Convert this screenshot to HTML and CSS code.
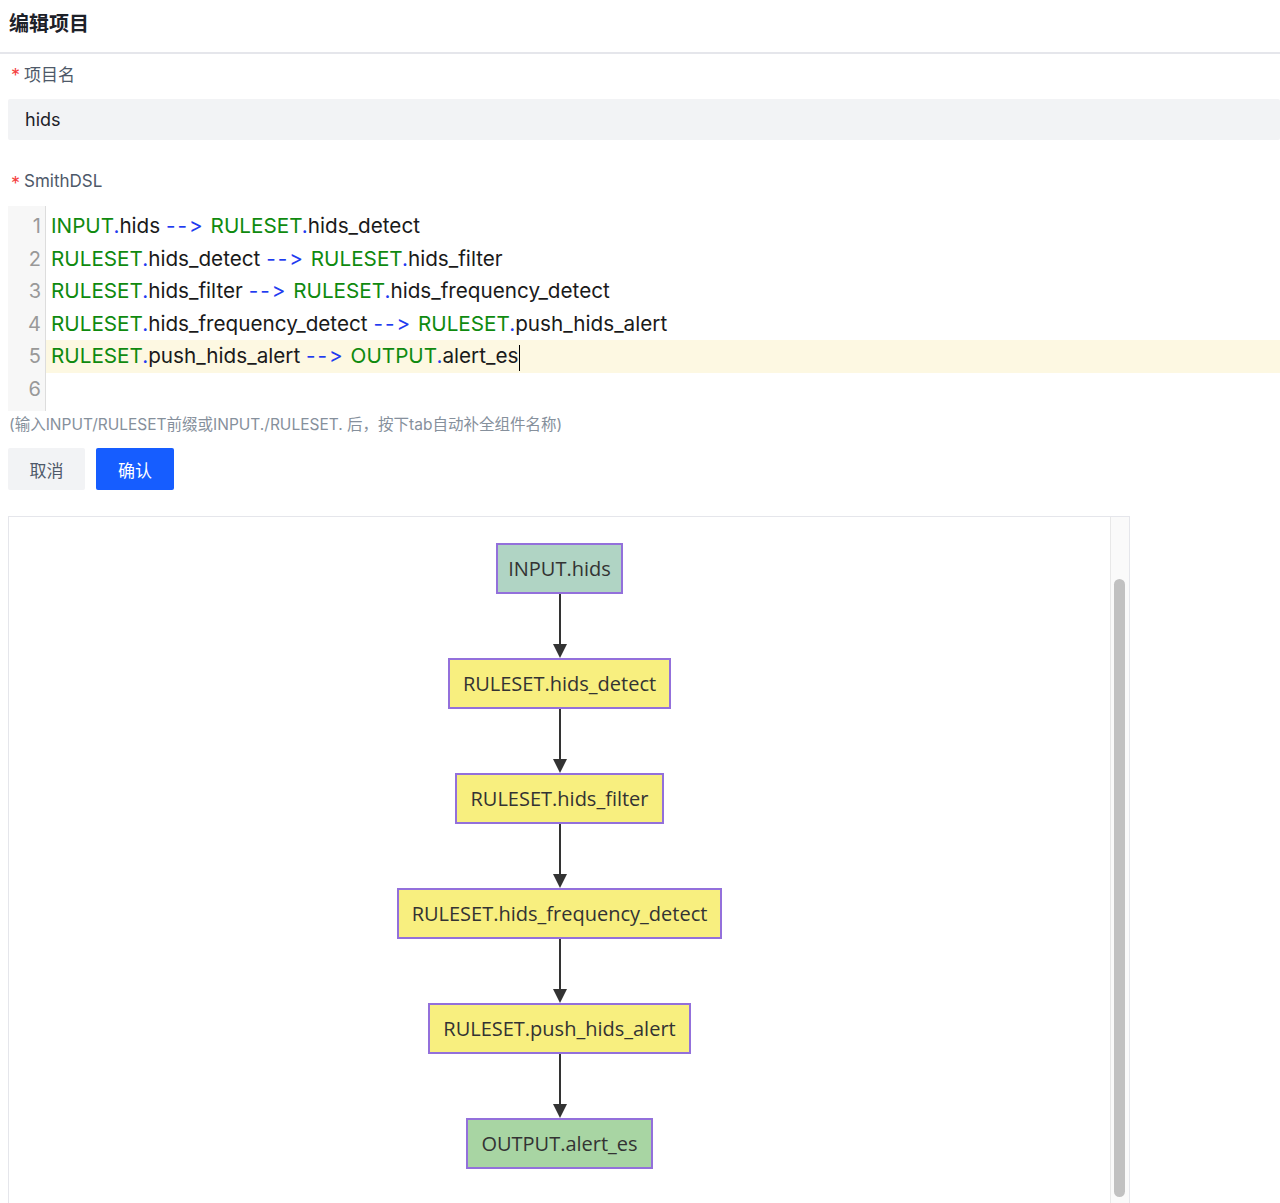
FILE: index.html
```html
<!DOCTYPE html>
<html lang="zh">
<head>
<meta charset="utf-8">
<title>编辑项目</title>
<link rel="stylesheet" href="styles.css">
</head>
<body>
<header class="page-header"><h1 class="title">编辑项目</h1></header>
<main class="form">
  <div class="field">
    <label class="label"><span class="req">*</span>项目名</label>
    <div class="input">hids</div>
  </div>
  <div class="field field-dsl">
    <label class="label"><span class="req">*</span>SmithDSL</label>
    <div class="editor">
      <div class="gutter">
        <div class="ln">1</div><div class="ln">2</div><div class="ln">3</div><div class="ln">4</div><div class="ln">5</div><div class="ln">6</div>
      </div>
      <div class="code">
        <div class="line"><span class="kw">INPUT</span><span class="dot">.</span>hids <span class="op">--&gt;</span> <span class="kw">RULESET</span><span class="dot">.</span>hids_detect</div>
        <div class="line"><span class="kw">RULESET</span><span class="dot">.</span>hids_detect <span class="op">--&gt;</span> <span class="kw">RULESET</span><span class="dot">.</span>hids_filter</div>
        <div class="line"><span class="kw">RULESET</span><span class="dot">.</span>hids_filter <span class="op">--&gt;</span> <span class="kw">RULESET</span><span class="dot">.</span>hids_frequency_detect</div>
        <div class="line"><span class="kw">RULESET</span><span class="dot">.</span>hids_frequency_detect <span class="op">--&gt;</span> <span class="kw">RULESET</span><span class="dot">.</span>push_hids_alert</div>
        <div class="line active"><span class="kw">RULESET</span><span class="dot">.</span>push_hids_alert <span class="op">--&gt;</span> <span class="kw">OUTPUT</span><span class="dot">.</span>alert_es<span class="cursor"></span></div>
        <div class="line"></div>
      </div>
    </div>
    <p class="hint">(输入INPUT/RULESET前缀或INPUT./RULESET. 后，按下tab自动补全组件名称)</p>
  </div>
  <div class="actions">
    <button class="btn btn-cancel">取消</button>
    <button class="btn btn-primary">确认</button>
  </div>
  <section class="diagram">
    <div class="canvas">
      <div class="node node-io node-in">INPUT.hids</div>
      <svg class="edge" width="16" height="64" viewBox="0 0 16 64"><line x1="8" y1="0" x2="8" y2="52" stroke="#333" stroke-width="2"/><path d="M1 50 L15 50 L8 64 Z" fill="#333"/></svg>
      <div class="node node-rule">RULESET.hids_detect</div>
      <svg class="edge" width="16" height="64" viewBox="0 0 16 64"><line x1="8" y1="0" x2="8" y2="52" stroke="#333" stroke-width="2"/><path d="M1 50 L15 50 L8 64 Z" fill="#333"/></svg>
      <div class="node node-rule">RULESET.hids_filter</div>
      <svg class="edge" width="16" height="64" viewBox="0 0 16 64"><line x1="8" y1="0" x2="8" y2="52" stroke="#333" stroke-width="2"/><path d="M1 50 L15 50 L8 64 Z" fill="#333"/></svg>
      <div class="node node-rule">RULESET.hids_frequency_detect</div>
      <svg class="edge" width="16" height="64" viewBox="0 0 16 64"><line x1="8" y1="0" x2="8" y2="52" stroke="#333" stroke-width="2"/><path d="M1 50 L15 50 L8 64 Z" fill="#333"/></svg>
      <div class="node node-rule">RULESET.push_hids_alert</div>
      <svg class="edge" width="16" height="64" viewBox="0 0 16 64"><line x1="8" y1="0" x2="8" y2="52" stroke="#333" stroke-width="2"/><path d="M1 50 L15 50 L8 64 Z" fill="#333"/></svg>
      <div class="node node-io node-out">OUTPUT.alert_es</div>
    </div>
    <div class="scrollbar"><div class="thumb"></div></div>
  </section>
</main>
</body>
</html>
```
FILE: styles.css
```css
* { box-sizing: border-box; }
html, body { margin: 0; padding: 0; background: #fff; }
body {
  font-family: Inter, "Noto Sans CJK SC", sans-serif;
  color: #1d2129;
  width: 1280px;
  height: 1203px;
  overflow: hidden;
}
.page-header {
  height: 54px;
  border-bottom: 2px solid #e5e6eb;
  padding: 0 9px;
  display: flex;
  align-items: center;
}
.title {
  margin: 0;
  font-size: 20px;
  font-weight: 700;
  font-family: "Noto Sans CJK SC", sans-serif;
  color: #1d2129;
  line-height: 1;
  margin-top: -6px;
}
.form { padding: 0 0 0 8px; }
.field { display: flex; flex-direction: column; }
.label {
  display: flex;
  align-items: center;
  height: 24px;
  margin-top: 7px;
  font-size: 17px;
  color: #4e5969;
  font-family: Inter, "Noto Sans CJK SC", sans-serif;
}
.req {
  color: #f53f3f;
  font-size: 18px;
  margin: 0 4px 0 3px;
  position: relative;
  top: 2px;
}
.input {
  margin-top: 14px;
  height: 41px;
  background: #f2f3f5;
  border-radius: 2px;
  padding: 0 17px;
  display: flex;
  align-items: center;
  font-size: 18px;
  color: #1d2129;
}
.field-dsl { margin-top: 29px; }
.field-dsl .label { margin-top: 0; }
.editor {
  margin-top: 13px;
  display: flex;
  min-height: 205px;
  font-family: Inter, "Noto Sans CJK SC", sans-serif;
  font-size: 20.7px;
}
.gutter {
  width: 38px;
  background: #f7f7f7;
  border-right: 1px solid #dddddd;
  padding-top: 4px;
  padding-bottom: 4px;
  flex: none;
}
.ln {
  height: 32.6px;
  line-height: 32.6px;
  text-align: right;
  padding-right: 4px;
  color: #999999;
  font-size: 20px;
}
.code { flex: 1; padding-top: 4px; }
.line {
  height: 32.6px;
  line-height: 32.6px;
  padding-left: 5px;
  color: #1a1a1a;
  white-space: pre;
}
.line.active { background: #fdf8e2; }
.kw { color: #0f8a0f; }
.dot { color: #1f3cf0; }
.op { color: #1f3cf0; letter-spacing: 2px; }
.cursor {
  display: inline-block;
  width: 0;
  height: 26px;
  border-left: 1px solid #000;
  vertical-align: middle;
  margin-left: 1px;
}
.hint {
  margin: 4px 0 0 1px;
  font-size: 15.5px;
  line-height: 20px;
  color: #86909c;
}
.actions {
  display: flex;
  gap: 11px;
  margin-top: 13px;
}
.btn {
  height: 42px;
  border: none;
  border-radius: 2px;
  font-size: 17px;
  font-family: "Noto Sans CJK SC", sans-serif;
  padding: 0;
  cursor: pointer;
}
.btn-cancel { width: 77px; background: #f2f3f5; color: #4e5969; }
.btn-primary { width: 78px; background: #165dff; color: #fff; }
.diagram {
  margin-top: 26px;
  width: 1122px;
  height: 700px;
  border: 1px solid #e5e6eb;
  display: flex;
}
.canvas {
  flex: 1;
  display: flex;
  flex-direction: column;
  align-items: center;
  padding-top: 26px;
}
.node {
  height: 51px;
  border: 2px solid #9370db;
  display: flex;
  align-items: center;
  justify-content: center;
  padding: 0 13px;
  font-family: "Open Sans", "DejaVu Sans", sans-serif;
  font-size: 20px;
  color: #333;
  white-space: nowrap;
}
.node-in { background: #b0d4c4; padding: 0 10px; }
.node-out { background: #a8d5a3; }
.node-rule { background: #f8ef7f; }
.edge { display: block; margin: 0; }
.scrollbar {
  width: 19px;
  background: #fafafa;
  border-left: 1px solid #e8e8e8;
  padding: 62px 4px 0 3px;
  flex: none;
}
.thumb {
  width: 11px;
  height: 618px;
  background: #c1c1c1;
  border-radius: 6px;
}
```
